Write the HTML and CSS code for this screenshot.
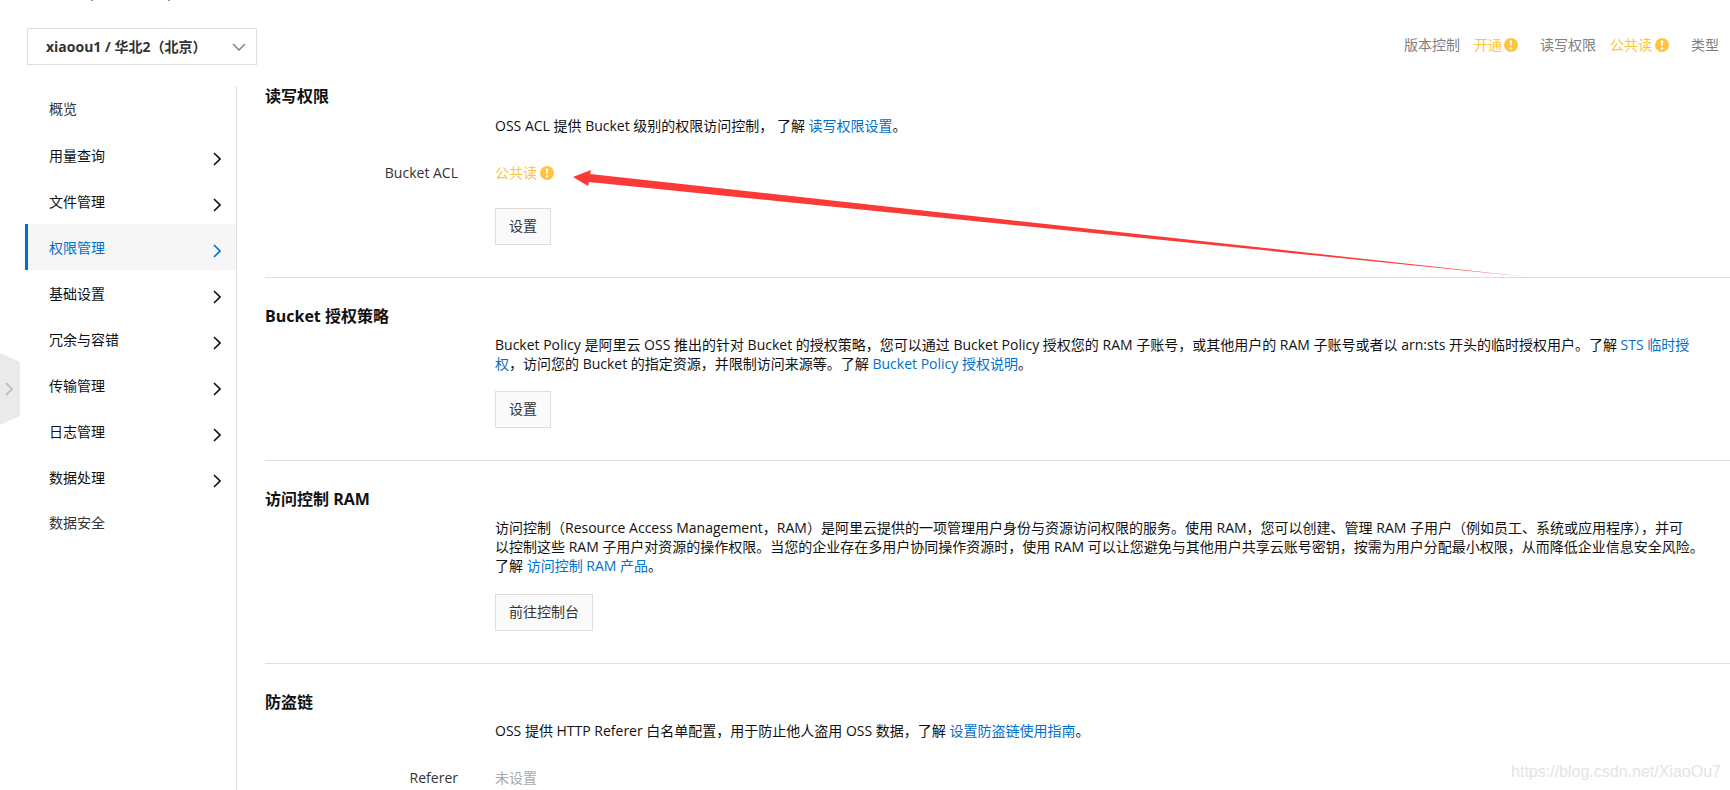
FILE: index.html
```html
<!DOCTYPE html>
<html lang="zh-CN">
<head>
<meta charset="utf-8">
<title>权限管理</title>
<link rel="stylesheet" href="styles.css">
</head>
<body>
<svg class="defs" aria-hidden="true">
  <symbol id="right" viewBox="0 0 8 14"><path d="M1 1l6 6-6 6" fill="none" stroke="currentColor" stroke-width="1.6"/></symbol>
  <symbol id="warn" viewBox="0 0 14 14"><circle cx="7" cy="7" r="7" fill="#ffc440"/><path d="M5.9 2.6h2.2l-.3 5.2H6.2z" fill="#fff"/><circle cx="7" cy="10.4" r="1.2" fill="#fff"/></symbol>
</svg>
<svg class="ticks" viewBox="0 0 80 1" aria-hidden="true"><path d="M0 0h2v1H0zM77 0h2v1h-2z" fill="#999"/></svg>
<header class="topbar">
  <button class="bucket" type="button"><span>xiaoou1 / 华北2（北京）</span>
    <svg class="down" viewBox="0 0 14 8"><path d="M1 1l6 6 6-6" fill="none" stroke="currentColor" stroke-width="1.6"/></svg>
  </button>
  <div class="status">
    <span class="key">版本控制</span><span class="warn">开通<svg class="mark near"><use href="#warn"/></svg></span>
    <span class="key next">读写权限</span><span class="warn">公共读<svg class="mark"><use href="#warn"/></svg></span>
    <span class="key next">类型</span>
  </div>
</header>
<div class="page">
  <nav class="side">
    <a href="#" class="item plain">概览</a>
    <a href="#" class="item">用量查询<svg class="chev"><use href="#right"/></svg></a>
    <a href="#" class="item">文件管理<svg class="chev"><use href="#right"/></svg></a>
    <a href="#" class="item active">权限管理<svg class="chev"><use href="#right"/></svg></a>
    <a href="#" class="item">基础设置<svg class="chev"><use href="#right"/></svg></a>
    <a href="#" class="item">冗余与容错<svg class="chev"><use href="#right"/></svg></a>
    <a href="#" class="item">传输管理<svg class="chev"><use href="#right"/></svg></a>
    <a href="#" class="item">日志管理<svg class="chev"><use href="#right"/></svg></a>
    <a href="#" class="item">数据处理<svg class="chev"><use href="#right"/></svg></a>
    <a href="#" class="item plain">数据安全</a>
  </nav>
  <main class="main">
    <section class="block first">
      <h2>读写权限</h2>
      <div class="body">
        <p>OSS ACL 提供 Bucket 级别的权限访问控制， 了解 <a href="#">读写权限设置</a>。</p>
        <div class="field"><span class="label">Bucket ACL</span><span class="warn">公共读<svg class="mark"><use href="#warn"/></svg></span></div>
        <button class="btn" type="button">设置</button>
      </div>
    </section>
    <section class="block">
      <h2>Bucket 授权策略</h2>
      <div class="body">
        <p>Bucket Policy 是阿里云 OSS 推出的针对 Bucket 的授权策略，您可以通过 Bucket Policy 授权您的 RAM 子账号，或其他用户的 RAM 子账号或者以 arn:sts 开头的临时授权用户。了解 <a href="#">STS 临时授权</a>，访问您的 Bucket 的指定资源，并限制访问来源等。了解 <a href="#">Bucket Policy 授权说明</a>。</p>
        <button class="btn" type="button">设置</button>
      </div>
    </section>
    <section class="block">
      <h2>访问控制 RAM</h2>
      <div class="body wide">
        <p>访问控制（Resource Access Management，RAM）是阿里云提供的一项管理用户身份与资源访问权限的服务。使用 RAM，您可以创建、管理 RAM 子用户（例如员工、系统或应用程序），并可<br>以控制这些 RAM 子用户对资源的操作权限。当您的企业存在多用户协同操作资源时，使用 RAM 可以让您避免与其他用户共享云账号密钥，按需为用户分配最小权限，从而降低企业信息安全风险。<br>了解 <a href="#">访问控制 RAM 产品</a>。</p>
        <button class="btn" type="button">前往控制台</button>
      </div>
    </section>
    <section class="block">
      <h2>防盗链</h2>
      <div class="body">
        <p>OSS 提供 HTTP Referer 白名单配置，用于防止他人盗用 OSS 数据，了解 <a href="#">设置防盗链使用指南</a>。</p>
        <div class="field"><span class="label">Referer</span><span class="unset">未设置</span></div>
      </div>
    </section>
  </main>
</div>
<button class="drawer" type="button" aria-label="展开">
  <svg viewBox="0 0 20 72"><path d="M0 0l20 9v54L0 72z" fill="#eaeaea"/><path d="M6 30l6 6-6 6" fill="none" stroke="#bdbdbd" stroke-width="1.8"/></svg>
</button>
<svg class="arrow" viewBox="0 0 970 120" aria-hidden="true"><path d="M0 14L18 7l-1 4L965 115L16 19l-1 4z" fill="#fb3a38"/></svg>
<div class="watermark">https://blog.csdn.net/XiaoOu7</div>
</body>
</html>
```
FILE: styles.css
```css
* { box-sizing: border-box; }
html, body { height: 100%; }
body {
  margin: 0;
  overflow: hidden;
  position: relative;
  background: #fff;
  color: #111;
  font: 14px/19px "Open Sans", "Noto Sans CJK SC", sans-serif;
}
button { font: inherit; color: #333; cursor: pointer; }
a { color: #0070cc; text-decoration: none; }
p, h2 { margin: 0; }
.defs { position: absolute; width: 0; height: 0; }
.ticks { position: absolute; left: 91px; top: 0; width: 80px; height: 1px; }
.topbar {
  display: flex;
  justify-content: space-between;
  align-items: flex-start;
  padding: 28px 11px 0 27px;
}
.bucket {
  display: flex;
  align-items: center;
  justify-content: space-between;
  width: 230px;
  height: 37px;
  padding: 0 10px 0 18px;
  border: 1px solid #dedede;
  background: #fff;
  font-weight: 700;
}
.down { width: 14px; height: 8px; color: #888; }
.status { display: flex; padding-top: 7px; white-space: nowrap; color: #808080; }
.status .warn { margin-left: 14px; }
.next { margin-left: 22px; }
.warn { display: inline-flex; align-items: center; color: #ffc440; }
.mark { width: 14px; height: 14px; margin-left: 3px; }
.near { margin-left: 2px; }
.page { display: flex; padding: 21px 0 0 25px; height: calc(100% - 65px); }
.side { flex: 0 0 212px; border-right: 1px solid #dedede; }
.item {
  display: flex;
  align-items: center;
  justify-content: space-between;
  height: 46px;
  padding: 1px 15px 0 21px;
  border-left: 3px solid transparent;
  color: #111;
}
.plain { color: #333; padding-top: 0; padding-bottom: 2px; }
.active { border-color: #0070cc; background: #f6f6f6; color: #0070cc; }
.chev { width: 8px; height: 14px; margin-top: 7px; }
.main { flex: 1; min-width: 0; padding-left: 28px; }
.block { padding: 27px 0 32px; border-bottom: 1px solid #dedede; }
.first { padding-top: 0; }
h2 { font-size: 16px; line-height: 22px; font-weight: 700; margin-bottom: 8px; }
.first h2 { line-height: 20px; margin-bottom: 10px; }
.body { padding: 0 36px 0 230px; }
.body.wide { padding-right: 18px; }
.field { display: flex; align-items: center; margin: 28px 0 -2px -230px; }
.label { width: 193px; margin-right: 37px; text-align: right; color: #333; }
.unset { color: #aaa; }
.btn {
  display: block;
  height: 37px;
  margin-top: 18px;
  padding: 0 13px 2px;
  border: 1px solid #dedede;
  background: #fafafa;
}
.wide .btn { margin-top: 19px; }
.field + .btn { margin-top: 28px; }
.drawer { position: absolute; left: 0; top: 353px; width: 20px; height: 72px; padding: 0; border: 0; background: none; }
.drawer svg { display: block; width: 20px; height: 72px; }
.arrow { position: absolute; left: 573px; top: 163px; width: 970px; height: 120px; pointer-events: none; }
.watermark {
  position: absolute;
  right: 9px;
  bottom: 8px;
  color: #e4e4e4;
  font: 16px/20px "Liberation Sans", sans-serif;
}
```
